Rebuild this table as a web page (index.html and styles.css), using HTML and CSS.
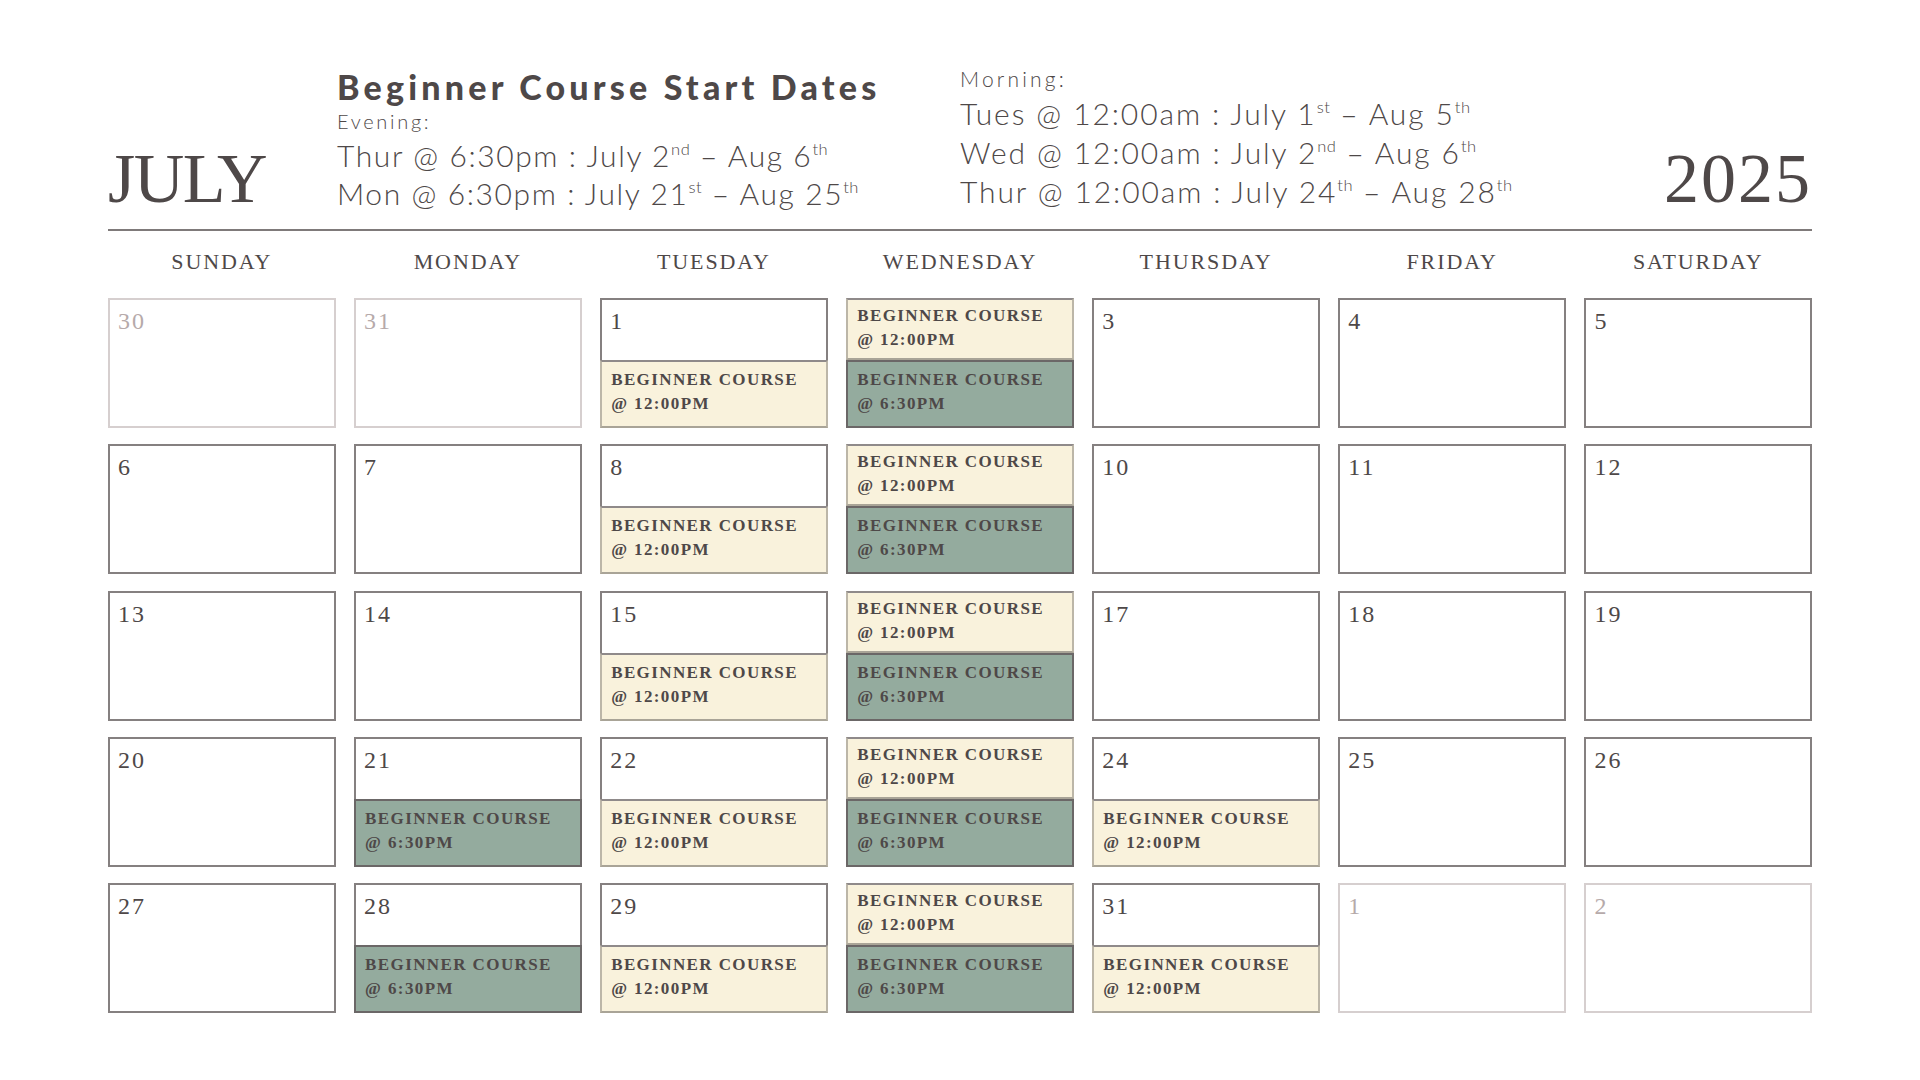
FILE: index.html
```html
<!DOCTYPE html>
<html lang="en">
<head>
<meta charset="utf-8">
<title>July 2025 – Beginner Course Start Dates</title>
<link rel="stylesheet" href="styles.css">
</head>
<body>
<div class="page">
  <header class="top">
    <div class="month">JULY</div>
    <div class="info evening">
      <h1 class="title">Beginner Course Start Dates</h1>
      <div class="label">Evening:</div>
      <div class="line">Thur @ 6:30pm : July 2<span class="sup">nd</span> – Aug 6<span class="sup">th</span></div>
      <div class="line">Mon @ 6:30pm : July 21<span class="sup">st</span> – Aug 25<span class="sup">th</span></div>
    </div>
    <div class="info morning">
      <div class="label">Morning:</div>
      <div class="line">Tues @ 12:00am : July 1<span class="sup">st</span> – Aug 5<span class="sup">th</span></div>
      <div class="line">Wed @ 12:00am : July 2<span class="sup">nd</span> – Aug 6<span class="sup">th</span></div>
      <div class="line">Thur @ 12:00am : July 24<span class="sup">th</span> – Aug 28<span class="sup">th</span></div>
    </div>
    <div class="year">2025</div>
  </header>

  <div class="days">
    <div class="day">SUNDAY</div>
    <div class="day">MONDAY</div>
    <div class="day">TUESDAY</div>
    <div class="day">WEDNESDAY</div>
    <div class="day">THURSDAY</div>
    <div class="day">FRIDAY</div>
    <div class="day">SATURDAY</div>
  </div>

  <div class="grid">
    <!-- week 1 -->
    <div class="cell muted"><div class="num">30</div></div>
    <div class="cell muted"><div class="num">31</div></div>
    <div class="cell"><div class="num">1</div><div class="ev cream">BEGINNER COURSE<br>@ 12:00PM</div></div>
    <div class="cell split"><div class="ev cream">BEGINNER COURSE<br>@ 12:00PM</div><div class="ev green">BEGINNER COURSE<br>@ 6:30PM</div></div>
    <div class="cell"><div class="num">3</div></div>
    <div class="cell"><div class="num">4</div></div>
    <div class="cell"><div class="num">5</div></div>
    <!-- week 2 -->
    <div class="cell"><div class="num">6</div></div>
    <div class="cell"><div class="num">7</div></div>
    <div class="cell"><div class="num">8</div><div class="ev cream">BEGINNER COURSE<br>@ 12:00PM</div></div>
    <div class="cell split"><div class="ev cream">BEGINNER COURSE<br>@ 12:00PM</div><div class="ev green">BEGINNER COURSE<br>@ 6:30PM</div></div>
    <div class="cell"><div class="num">10</div></div>
    <div class="cell"><div class="num">11</div></div>
    <div class="cell"><div class="num">12</div></div>
    <!-- week 3 -->
    <div class="cell"><div class="num">13</div></div>
    <div class="cell"><div class="num">14</div></div>
    <div class="cell"><div class="num">15</div><div class="ev cream">BEGINNER COURSE<br>@ 12:00PM</div></div>
    <div class="cell split"><div class="ev cream">BEGINNER COURSE<br>@ 12:00PM</div><div class="ev green">BEGINNER COURSE<br>@ 6:30PM</div></div>
    <div class="cell"><div class="num">17</div></div>
    <div class="cell"><div class="num">18</div></div>
    <div class="cell"><div class="num">19</div></div>
    <!-- week 4 -->
    <div class="cell"><div class="num">20</div></div>
    <div class="cell"><div class="num">21</div><div class="ev green">BEGINNER COURSE<br>@ 6:30PM</div></div>
    <div class="cell"><div class="num">22</div><div class="ev cream">BEGINNER COURSE<br>@ 12:00PM</div></div>
    <div class="cell split"><div class="ev cream">BEGINNER COURSE<br>@ 12:00PM</div><div class="ev green">BEGINNER COURSE<br>@ 6:30PM</div></div>
    <div class="cell"><div class="num">24</div><div class="ev cream">BEGINNER COURSE<br>@ 12:00PM</div></div>
    <div class="cell"><div class="num">25</div></div>
    <div class="cell"><div class="num">26</div></div>
    <!-- week 5 -->
    <div class="cell"><div class="num">27</div></div>
    <div class="cell"><div class="num">28</div><div class="ev green">BEGINNER COURSE<br>@ 6:30PM</div></div>
    <div class="cell"><div class="num">29</div><div class="ev cream">BEGINNER COURSE<br>@ 12:00PM</div></div>
    <div class="cell split"><div class="ev cream">BEGINNER COURSE<br>@ 12:00PM</div><div class="ev green">BEGINNER COURSE<br>@ 6:30PM</div></div>
    <div class="cell"><div class="num">31</div><div class="ev cream">BEGINNER COURSE<br>@ 12:00PM</div></div>
    <div class="cell muted"><div class="num">1</div></div>
    <div class="cell muted"><div class="num">2</div></div>
  </div>
</div>
</body>
</html>
```

FILE: styles.css
```css
html, body {
  margin: 0;
  padding: 0;
  background: #ffffff;
}

body {
  color: #4e4848;
  font-family: "Liberation Serif", "Times New Roman", serif;
}

.page {
  width: 1704px;
  padding: 0 108px;
}

/* ---------- header ---------- */
.top {
  display: flex;
  align-items: flex-start;
  height: 229px;
  border-bottom: 2px solid #7f7a7a;
}

.month {
  width: 229px;
  margin-top: 144px;
  font-family: "Liberation Serif", serif;
  font-size: 70px;
  line-height: 70px;
  letter-spacing: -1.5px;
  color: #4e4848;
}

.year {
  margin-top: 144px;
  margin-left: auto;
  font-family: "Liberation Serif", serif;
  font-size: 70px;
  line-height: 70px;
  letter-spacing: 2px;
  color: #4e4848;
}

.info {
  font-family: Lato, "Open Sans", sans-serif;
  color: #4e4848;
}

.evening {
  width: 623px;
  margin-top: 68px;
}

.morning {
  margin-top: 64px;
}

.title {
  margin: 0;
  font-family: Lato, sans-serif;
  font-weight: 900;
  font-size: 34px;
  line-height: 38px;
  letter-spacing: 4.2px;
  white-space: nowrap;
}

.label {
  font-weight: 300;
  font-size: 20px;
  line-height: 30px;
  letter-spacing: 2.7px;
}

.morning .label {
  font-size: 21px;
  letter-spacing: 3.2px;
}

.line {
  font-weight: 300;
  font-size: 30px;
  line-height: 38px;
  letter-spacing: 1.6px;
  white-space: nowrap;
}

.morning .line {
  line-height: 39px;
  letter-spacing: 1.9px;
}

.sup {
  font-size: 0.55em;
  vertical-align: 0.75em;
  line-height: 0;
  letter-spacing: 0.5px;
}

/* ---------- weekday header ---------- */
.days {
  display: grid;
  grid-template-columns: repeat(7, 1fr);
  column-gap: 18.5px;
  margin-top: 18px;
}

.day {
  text-align: center;
  font-size: 22px;
  line-height: 26px;
  letter-spacing: 1.9px;
  color: #4e4848;
}

/* ---------- month grid ---------- */
.grid {
  display: grid;
  grid-template-columns: repeat(7, 1fr);
  grid-auto-rows: 130px;
  column-gap: 18.5px;
  row-gap: 16.3px;
  margin-top: 23px;
}

.cell {
  box-sizing: border-box;
  display: flex;
  flex-direction: column;
  border: 2px solid #858080;
  background: #ffffff;
}

.cell.muted {
  border-color: #d6cfcf;
}

.num {
  flex: 1;
  padding: 8px 0 0 8px;
  font-size: 24px;
  line-height: 26px;
  letter-spacing: 2px;
  color: #4e4848;
}

.muted .num {
  color: #b6aaaa;
}

.ev {
  box-sizing: border-box;
  height: 68px;
  margin: 0 -2px -2px;
  padding: 6px 9px 0;
  border: 2px solid;
  font-family: "Liberation Serif", serif;
  font-weight: 700;
  font-size: 17px;
  line-height: 24px;
  letter-spacing: 1.4px;
  color: #4e4848;
  white-space: nowrap;
}

.cream {
  background: #f9f2dc;
  border-color: #8f8a8a #bcb6a8 #a9a497;
}

.green {
  background: #94ab9e;
  border-color: #6b6767;
}

.split .ev.cream {
  height: 62px;
  margin: -2px -2px 0;
  padding-top: 4px;
}

.split .ev.green {
  height: 68px;
  margin: 0 -2px -2px;
}
```
